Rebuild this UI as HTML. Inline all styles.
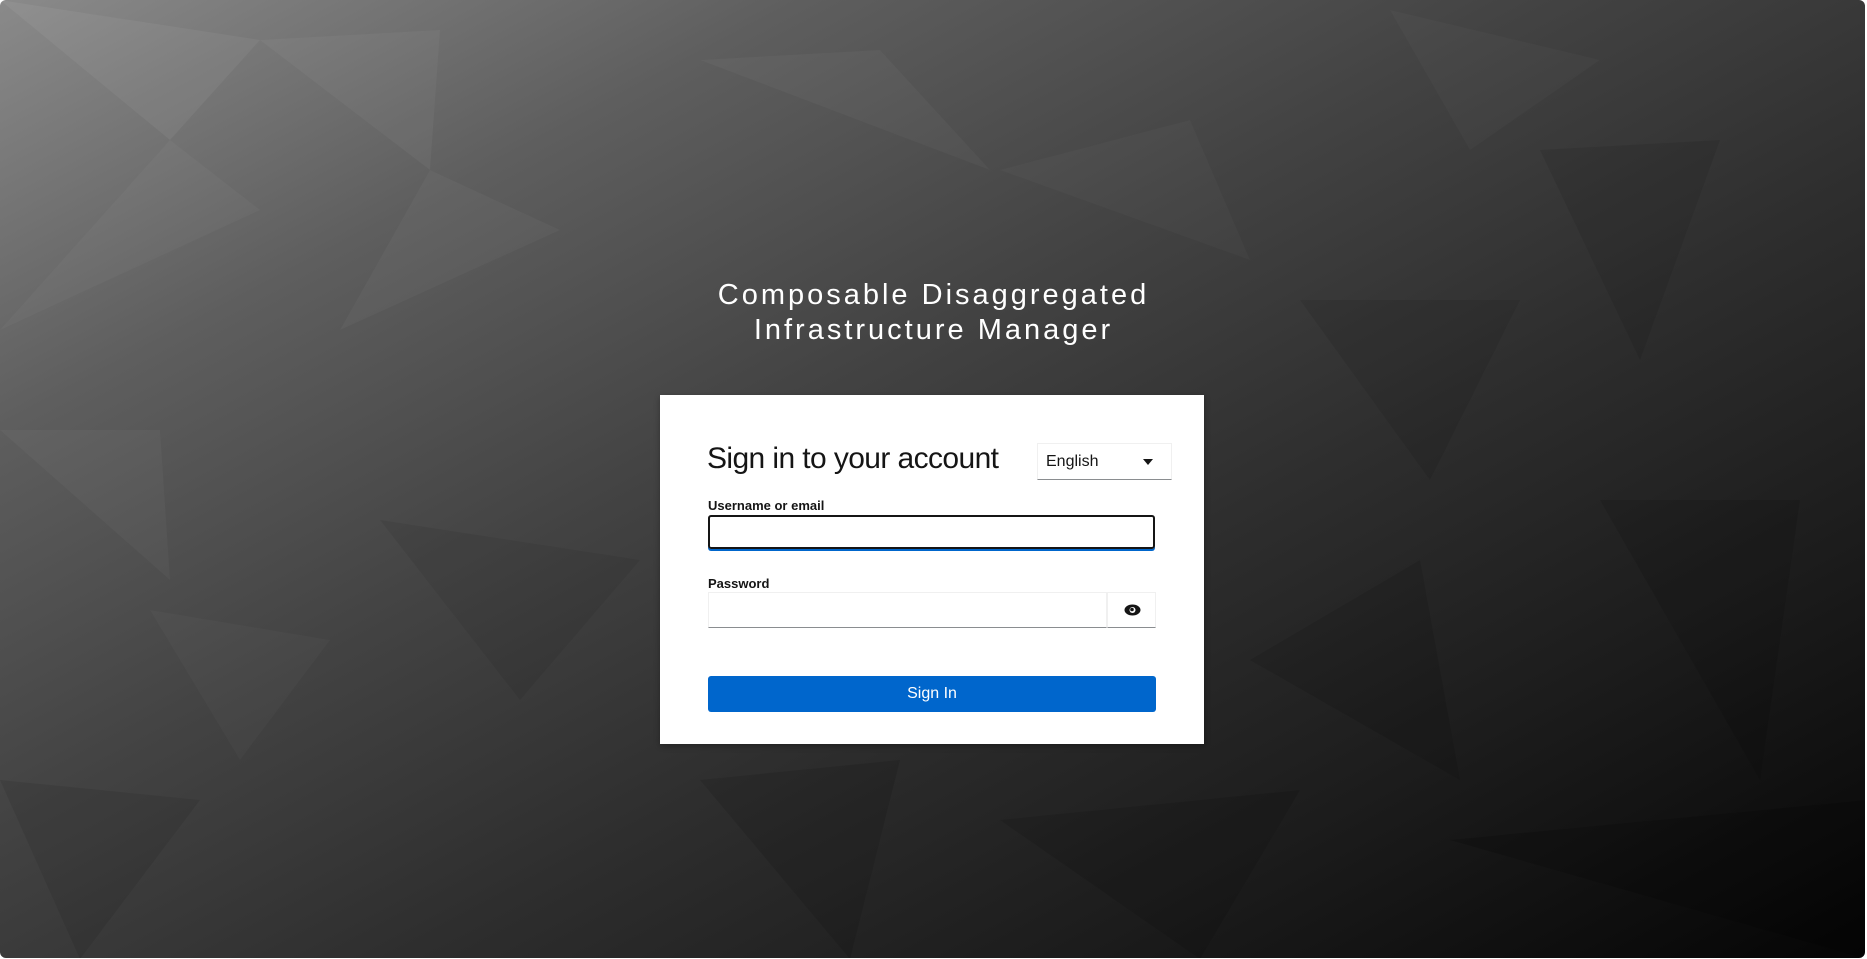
<!DOCTYPE html>
<html><head><meta charset="utf-8"><style>
html,body{margin:0;padding:0;width:1867px;height:959px;background:#fff;overflow:hidden;font-family:"Liberation Sans",sans-serif}
#bg{position:absolute;left:0;top:0;width:1865px;height:958px;border-radius:6px;overflow:hidden;
background:linear-gradient(152deg,#8a8a8a 0%,#5e5e5e 22%,#434343 42%,#2e2e2e 60%,#1c1c1c 78%,#050505 100%)}
#bg svg{position:absolute;left:0;top:0}
.title{position:absolute;left:0;width:1867px;text-align:center;color:#fff;font-size:29px;letter-spacing:3px;line-height:35px;top:278px}
.card{position:absolute;left:660px;top:395px;width:544px;height:349px;background:#fff;box-shadow:0 2px 6px rgba(0,0,0,.3)}
.h{position:absolute;left:47px;top:47px;font-size:30px;color:#151515;letter-spacing:-0.6px}
.sel{position:absolute;left:377px;top:48px;width:135px;height:37px;border:1px solid #f0f0f0;border-bottom:1px solid #8a8d90;box-sizing:border-box;font-size:16px;color:#151515;padding:9px 0 0 8px}
.sel:after{content:"";position:absolute;right:18px;top:15px;border-left:5px solid transparent;border-right:5px solid transparent;border-top:6px solid #151515}
.lbl{position:absolute;left:48px;font-size:13px;font-weight:bold;color:#151515}
.in1{position:absolute;left:48px;top:120px;width:447px;height:34px;box-sizing:border-box;border:2px solid #151515;border-radius:3px;box-shadow:0 2px 0 #0066cc}
.in2{position:absolute;left:48px;top:197px;width:399px;height:36px;box-sizing:border-box;border:1px solid #f0f0f0;border-bottom:1px solid #8a8d90}
.eye{position:absolute;left:447px;top:197px;width:49px;height:36px;box-sizing:border-box;border:1px solid #f0f0f0;border-bottom:1px solid #8a8d90}
.sb{position:absolute;left:48px;top:281px;width:448px;height:36px;background:#0066cc;border-radius:3px;color:#fff;font-size:16px;text-align:center;line-height:36px}
</style></head><body>
<div id="bg">
<svg width="1867" height="959">
<g fill="#fff">
<polygon points="0,0 260,40 170,140" opacity=".05"/>
<polygon points="260,40 440,30 430,170" opacity=".04"/>
<polygon points="170,140 260,210 0,330" opacity=".03"/>
<polygon points="430,170 560,230 340,330" opacity=".03"/>
<polygon points="0,430 160,430 170,580" opacity=".03"/>
<polygon points="700,60 880,50 990,170" opacity=".03"/>
<polygon points="1000,170 1190,120 1250,260" opacity=".025"/>
<polygon points="1390,10 1600,60 1470,150" opacity=".025"/>
<polygon points="150,610 330,640 240,760" opacity=".025"/>
</g>
<g fill="#000">
<polygon points="1540,150 1720,140 1640,360" opacity=".08"/>
<polygon points="1300,300 1520,300 1430,480" opacity=".08"/>
<polygon points="1250,660 1420,560 1460,780" opacity=".1"/>
<polygon points="1600,500 1800,500 1760,780" opacity=".1"/>
<polygon points="380,520 640,560 520,700" opacity=".06"/>
<polygon points="700,780 900,760 850,959" opacity=".1"/>
<polygon points="1000,820 1300,790 1200,959" opacity=".1"/>
<polygon points="0,780 200,800 80,959" opacity=".08"/>
<polygon points="1450,840 1867,800 1867,959" opacity=".15"/>
</g>
</svg>
</div>
<div class="title">Composable Disaggregated<br>Infrastructure Manager</div>
<div class="card">
<div class="h">Sign in to your account</div>
<div class="sel">English</div>
<div class="lbl" style="top:103px">Username or email</div>
<div class="in1"></div>
<div class="lbl" style="top:181px">Password</div>
<div class="in2"></div>
<div class="eye"><svg width="49" height="34" viewBox="0 0 49 34"><ellipse cx="24.5" cy="17" rx="8" ry="5.5" fill="#151515"/><circle cx="24.5" cy="17" r="3" fill="#fff"/><circle cx="24" cy="16.5" r="1.8" fill="#151515"/></svg></div>
<div class="sb">Sign In</div>
</div>
</body></html>
